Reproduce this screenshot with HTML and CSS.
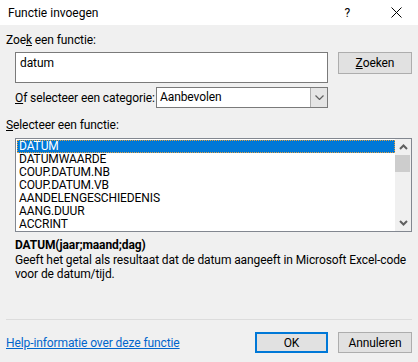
FILE: index.html
```html
<!DOCTYPE html>
<html>
<head>
<meta charset="utf-8">
<link rel="stylesheet" href="styles.css">
</head>
<body>
<div class="dialog">
  <div class="titlebar">
    <span class="title">Functie invoegen</span>
    <span class="help">?</span>
    <svg class="close" width="11" height="11" viewBox="0 0 11 11"><path d="M0.5 0.5 L10.5 10.5 M10.5 0.5 L0.5 10.5" stroke="#000" stroke-width="1" fill="none"/></svg>
  </div>
  <div class="content">
    <div class="label l-search">Zoe<u>k</u> een functie:</div>
    <div class="search-row">
      <div class="textbox">datum</div>
      <div class="btn btn-search"><u>Z</u>oeken</div>
    </div>
    <div class="cat-row">
      <span class="cat-label"><u>O</u>f selecteer een categorie:</span>
      <div class="select">
        <span class="select-value">Aanbevolen</span>
        <span class="select-btn"><svg width="9" height="5" viewBox="0 0 9 5"><path d="M0.5 0.5 L4.5 4.5 L8.5 0.5" stroke="#606060" stroke-width="1.2" fill="none"/></svg></span>
      </div>
    </div>
    <div class="label l-list"><u>S</u>electeer een functie:</div>
    <div class="listbox">
      <div class="items">
        <div class="item selected">DATUM</div>
        <div class="item">DATUMWAARDE</div>
        <div class="item">COUP.DATUM.NB</div>
        <div class="item">COUP.DATUM.VB</div>
        <div class="item">AANDELENGESCHIEDENIS</div>
        <div class="item">AANG.DUUR</div>
        <div class="item">ACCRINT</div>
      </div>
      <div class="scrollbar">
        <svg class="arrow" width="9" height="6" viewBox="0 0 9 6"><path d="M1 5 L4.5 1.5 L8 5" stroke="#606060" stroke-width="2" fill="none"/></svg>
        <div class="track"><div class="thumb"></div></div>
        <svg class="arrow" width="9" height="6" viewBox="0 0 9 6"><path d="M1 1 L4.5 4.5 L8 1" stroke="#606060" stroke-width="2" fill="none"/></svg>
      </div>
    </div>
    <div class="syntax">DATUM(jaar;maand;dag)</div>
    <div class="desc">Geeft het getal als resultaat dat de datum aangeeft in Microsoft Excel-code voor de datum/tijd.</div>
    <div class="spacer"></div>
    <div class="separator"></div>
    <div class="footer">
      <a class="helplink" href="#">Help-informatie over deze functie</a>
      <div class="btn btn-ok">OK</div>
      <div class="btn btn-cancel">Annuleren</div>
    </div>
  </div>
</div>
</body>
</html>
```
FILE: styles.css
```css
* { box-sizing: border-box; }
html, body { margin: 0; padding: 0; }
body {
  width: 418px;
  height: 362px;
  background: #f0f0f0;
  font-family: "Segoe UI", Roboto, "Noto Sans", sans-serif;
  font-size: 12px;
  letter-spacing: -0.1px;
  color: #000;
  overflow: hidden;
}
.dialog { display: flex; flex-direction: column; height: 362px; }
.titlebar {
  height: 25px;
  background: #fff;
  display: flex;
  align-items: center;
  padding-left: 8px;
}
.title { font-size: 12px; flex: 1; letter-spacing: 0; }
.help { font-size: 12px; margin-right: 41px; }
.close { margin-right: 16px; }
.content {
  flex: 1;
  padding: 0 6px 9px 6px;
  display: flex;
  flex-direction: column;
}
.label { height: 16px; line-height: 16px; white-space: nowrap; }
.l-search { margin-top: 7px; }
.search-row { display: flex; margin-top: 4px; margin-left: 9px; }
.textbox {
  width: 313px;
  height: 31px;
  background: #fff;
  border: 1px solid #7a7a7a;
  padding: 2px 4px;
  line-height: 16px;
}
.btn {
  background: #e1e1e1;
  border: 1px solid #adadad;
  display: flex;
  align-items: center;
  justify-content: center;
}
.btn-search { width: 74px; height: 22px; margin-left: 10px; }
.cat-row { display: flex; align-items: center; margin-top: 4px; margin-left: 9px; height: 21px; }
.cat-label { width: 141px; white-space: nowrap; }
.select {
  width: 172px;
  height: 21px;
  background: #fff;
  border: 1px solid #7a7a7a;
  display: flex;
}
.select-value { flex: 1; padding-left: 3px; line-height: 19px; }
.select-btn {
  width: 17px;
  background: #e5e5e5;
  border-left: 1px solid #adadad;
  display: flex;
  align-items: center;
  justify-content: center;
}
.l-list { margin-top: 9px; }
.listbox {
  margin-top: 5px;
  margin-left: 9px;
  width: 397px;
  height: 94px;
  background: #fff;
  border: 1px solid #828790;
  display: flex;
}
.items { flex: 1; padding: 1px 0 0 1px; }
.item { height: 13px; line-height: 13px; padding-left: 2px; }
.item.selected {
  background: #0078d7;
  color: #fff;
  outline: 1px dotted #e0a040;
  outline-offset: -1px;
}
.scrollbar {
  width: 16px;
  background: #f0f0f0;
  display: flex;
  flex-direction: column;
  align-items: center;
}
.arrow { margin: 5px 0; flex: none; }
.track { flex: 1; width: 100%; }
.thumb { width: 15px; height: 17px; background: #cdcdcd; margin-left: 0; }
.syntax { margin-top: 5px; margin-left: 9px; font-weight: bold; line-height: 16px; }
.desc { margin-left: 9px; line-height: 14px; width: 397px; }
.spacer { flex: 1; }
.separator { height: 1px; background: #dcdcdc; margin-bottom: 12px; }
.footer { display: flex; align-items: center; }
.helplink { color: #0066cc; text-decoration: underline; flex: 1; }
.btn-ok { width: 73px; height: 21px; border: 2px solid #0078d7; }
.btn-cancel { width: 74px; height: 21px; margin-left: 10px; }
```
